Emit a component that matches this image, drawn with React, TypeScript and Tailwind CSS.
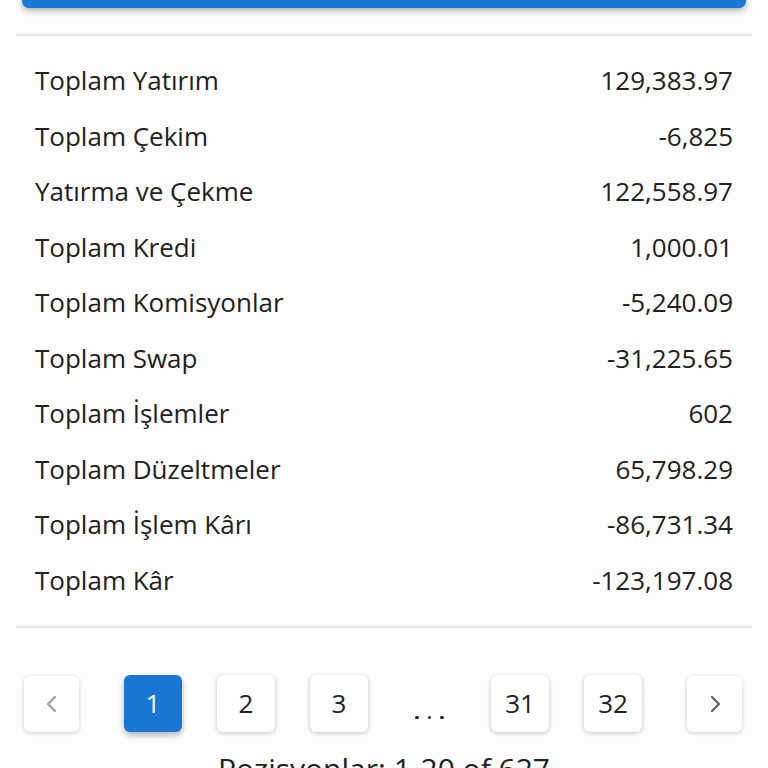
import React from "react";

const rows: [string, string][] = [
  ["Toplam Yatırım", "129,383.97"],
  ["Toplam Çekim", "-6,825"],
  ["Yatırma ve Çekme", "122,558.97"],
  ["Toplam Kredi", "1,000.01"],
  ["Toplam Komisyonlar", "-5,240.09"],
  ["Toplam Swap", "-31,225.65"],
  ["Toplam İşlemler", "602"],
  ["Toplam Düzeltmeler", "65,798.29"],
  ["Toplam İşlem Kârı", "-86,731.34"],
  ["Toplam Kâr", "-123,197.08"],
];

function PageBtn({ label, active }: { label: string; active?: boolean }) {
  return (
    <div
      className={
        "w-[58px] h-[57px] rounded-[6px] flex items-center justify-center text-[26px] " +
        (active
          ? "bg-[#1976d2] text-white shadow-[0_3px_6px_rgba(0,0,0,0.3)]"
          : "bg-white text-[#212121] shadow-[0_1px_4px_rgba(0,0,0,0.25)]")
      }
    >
      {label}
    </div>
  );
}

export default function App() {
  return (
    <div
      className="w-[768px] h-[768px] overflow-hidden bg-[#fdfdfd] text-[#212121]"
      style={{ fontFamily: '"Open Sans", "DejaVu Sans", sans-serif' }}
    >
      <div className="mx-[22px] -mt-[40px] h-[48px] rounded-[7px] bg-[#1976d2] shadow-[0_3px_6px_rgba(0,0,0,0.3)]" />
      <div className="mx-[16px] mt-[26px] h-[2px] bg-[#e3e3e3]" />
      <div className="mx-[16px] pt-[17px] pb-[18px] px-[19px]">
        {rows.map(([k, v]) => (
          <div key={k} className="h-[55.5px] flex items-center justify-between text-[26px]">
            <span>{k}</span>
            <span>{v}</span>
          </div>
        ))}
      </div>
      <div className="mx-[16px] h-[2px] bg-[#e3e3e3]" />
      <div className="mt-[47px] mx-[24px] flex items-center gap-[35px]">
        <div className="w-[55px] h-[56px] mr-[10px] rounded-[6px] bg-white shadow-[0_1px_4px_rgba(0,0,0,0.2)] flex items-center justify-center">
          <svg width="24" height="24" viewBox="0 0 24 24" fill="none" stroke="#9e9e9e" strokeWidth="2.2" strokeLinecap="round" strokeLinejoin="round">
            <path d="M15 5l-7 7 7 7" />
          </svg>
        </div>
        <PageBtn label="1" active />
        <PageBtn label="2" />
        <PageBtn label="3" />
        <div className="w-[53px] h-[57px] flex items-end justify-center gap-[9px] pb-[13px]">
          <span className="w-[3.5px] h-[3.5px] rounded-full bg-[#212121]" />
          <span className="w-[3.5px] h-[3.5px] rounded-full bg-[#212121]" />
          <span className="w-[3.5px] h-[3.5px] rounded-full bg-[#212121]" />
        </div>
        <PageBtn label="31" />
        <PageBtn label="32" />
        <div className="w-[55px] h-[56px] ml-[10px] rounded-[6px] bg-white shadow-[0_1px_4px_rgba(0,0,0,0.2)] flex items-center justify-center">
          <svg width="24" height="24" viewBox="0 0 24 24" fill="none" stroke="#616161" strokeWidth="2.2" strokeLinecap="round" strokeLinejoin="round">
            <path d="M9 5l7 7-7 7" />
          </svg>
        </div>
      </div>
      <div className="mt-[14px] text-center text-[30px]">Pozisyonlar: 1-20 of 627</div>
    </div>
  );
}
